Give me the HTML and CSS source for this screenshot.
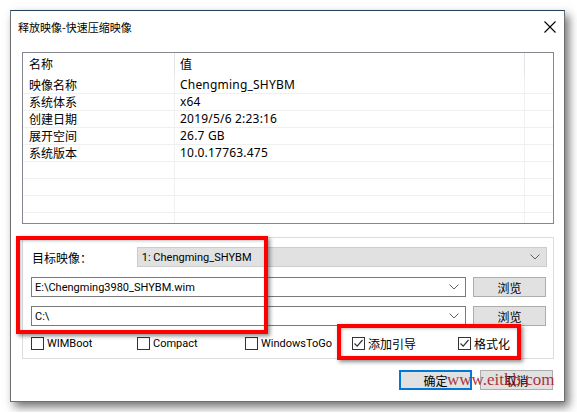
FILE: index.html
```html
<!DOCTYPE html>
<html lang="zh-CN">
<head>
  <meta charset="UTF-8">
  <title>释放映像-快速压缩映像</title>
  <link rel="stylesheet" href="styles.css">
</head>
<body>

  <div class="window">
    <div class="titlebar">
      <span class="title">释放映像-快速压缩映像</span>
      <svg class="close" width="12" height="12" viewBox="0 0 12 12">
        <path d="M0.5 0.5 L11.5 11.5 M11.5 0.5 L0.5 11.5" stroke="#000" stroke-width="1.1" fill="none"/>
      </svg>
    </div>

    <div class="content">
      <div class="listview">
        <div class="lv-head">
          <div class="c1">名称</div>
          <div class="c2">值</div>
          <div class="c3"></div>
        </div>
        <div class="lv-row"><div class="c1">映像名称</div><div class="c2">Chengming_SHYBM</div><div class="c3"></div></div>
        <div class="lv-row"><div class="c1">系统体系</div><div class="c2">x64</div><div class="c3"></div></div>
        <div class="lv-row"><div class="c1">创建日期</div><div class="c2">2019/5/6 2:23:16</div><div class="c3"></div></div>
        <div class="lv-row"><div class="c1">展开空间</div><div class="c2">26.7 GB</div><div class="c3"></div></div>
        <div class="lv-row"><div class="c1">系统版本</div><div class="c2">10.0.17763.475</div><div class="c3"></div></div>
        <div class="lv-row"><div class="c1"></div><div class="c2"></div><div class="c3"></div></div>
        <div class="lv-row"><div class="c1"></div><div class="c2"></div><div class="c3"></div></div>
        <div class="lv-row"><div class="c1"></div><div class="c2"></div><div class="c3"></div></div>
        <div class="lv-row"><div class="c1"></div><div class="c2"></div><div class="c3"></div></div>
      </div>

      <div class="group">
        <div class="g-row first">
          <span class="label">目标映像：</span>
          <div class="combo disabled">
            <span>1: Chengming_SHYBM</span>
            <svg class="chev" width="10" height="6" viewBox="0 0 10 6"><path d="M0.5 0.5 L5 5 L9.5 0.5" stroke="#606060" fill="none"/></svg>
          </div>
        </div>
        <div class="g-row second">
          <div class="combo path">
            <span>E:\Chengming3980_SHYBM.wim</span>
            <svg class="chev" width="10" height="6" viewBox="0 0 10 6"><path d="M0.5 0.5 L5 5 L9.5 0.5" stroke="#606060" fill="none"/></svg>
          </div>
          <button class="btn browse">浏览</button>
        </div>
        <div class="g-row third">
          <div class="combo path">
            <span>C:\</span>
            <svg class="chev" width="10" height="6" viewBox="0 0 10 6"><path d="M0.5 0.5 L5 5 L9.5 0.5" stroke="#606060" fill="none"/></svg>
          </div>
          <button class="btn browse">浏览</button>
        </div>
        <div class="checks">
          <label class="chk w106"><span class="box"></span>WIMBoot</label>
          <label class="chk w108"><span class="box"></span>Compact</label>
          <label class="chk w107"><span class="box"></span>WindowsToGo</label>
          <label class="chk cjk w106"><span class="box on"><svg width="11" height="11" viewBox="0 0 11 11"><path d="M1.5 5.5 L4.2 8.2 L9.5 2" stroke="#333" stroke-width="1.2" fill="none"/></svg></span>添加引导</label>
          <label class="chk cjk"><span class="box on"><svg width="11" height="11" viewBox="0 0 11 11"><path d="M1.5 5.5 L4.2 8.2 L9.5 2" stroke="#333" stroke-width="1.2" fill="none"/></svg></span>格式化</label>
        </div>
      </div>

      <div class="actions">
        <button class="btn default">确定</button>
        <button class="btn">取消</button>
      </div>
    </div>

    <!-- red markers drawn over the dialog -->
    <div class="mark mark-image"></div>
    <div class="mark mark-boot"></div>
    <div class="watermark">www.eitkb.com</div>
  </div>

</body>
</html>
```

FILE: styles.css
```css
body {
  margin: 0;
  padding: 10px;
  background: #fff;
  font-family: "Noto Sans", "Noto Sans CJK SC", sans-serif;
  font-size: 12px;
  color: #000;
}
.window {
  position: relative;
  width: 553px;
  height: 390px;
  background: #fff;
  border: 1px solid #6f6f6f;
  border-top-color: #23415e;
  box-shadow: 4px 5px 9px rgba(0,0,0,0.55);
}
.titlebar {
  height: 30px;
  display: flex;
  align-items: center;
  justify-content: space-between;
  padding: 0 8px 0 7px;
}
.title {
  font-family: "Noto Sans CJK SC", sans-serif;
  font-size: 11px;
  padding-top: 1px;
}
.close {
  margin-top: 1px;
}
.content {
  padding: 11px 10px 0 11px;
}

/* list of image properties */
.listview {
  height: 170px;
  border: 1px solid #828790;
  overflow: hidden;
}
.lv-head, .lv-row {
  display: flex;
}
.lv-head {
  height: 24px;
  align-items: center;
  font-family: "Noto Sans CJK SC", sans-serif;
  font-size: 12px;
}
.lv-head .c1, .lv-head .c2, .lv-head .c3 {
  height: 24px;
  line-height: 22px;
}
.lv-head .c2 {
  border-left: 1px solid #e5e5e5;
}
.lv-head .c3 {
  border-left: 1px solid #e5e5e5;
}
.lv-row {
  height: 17px;
  line-height: 16px;
  border-bottom: 1px solid #f0f0f0;
  box-sizing: border-box;
}
.lv-row .c2, .lv-row .c3 {
  border-left: 1px solid #f0f0f0;
}
.c1 {
  width: 151px;
  padding-left: 6px;
  box-sizing: border-box;
  font-family: "Noto Sans CJK SC", sans-serif;
}
.c2 {
  width: 350px;
  padding-left: 5px;
  box-sizing: border-box;
  letter-spacing: 0.2px;
}
.lv-head .c2 {
  letter-spacing: 0;
}
.c3 {
  flex: 1;
}

/* target / path options */
.group {
  margin-top: 13px;
  height: 122px;
  border: 1px solid #dcdcdc;
  padding: 9px 6px 0 8px;
  box-sizing: border-box;
  font-family: Roboto, "Noto Sans CJK SC", sans-serif;
  font-size: 11px;
}
.g-row {
  display: flex;
  align-items: center;
  height: 20px;
}
.g-row.second {
  margin-top: 10px;
}
.g-row.third {
  margin-top: 9px;
}
.label {
  width: 106px;
  padding-left: 1px;
  box-sizing: border-box;
  font-family: "Noto Sans CJK SC", sans-serif;
  font-size: 12px;
}
.combo {
  height: 20px;
  box-sizing: border-box;
  display: flex;
  align-items: center;
  justify-content: space-between;
  padding: 0 6px 0 4px;
}
.combo.disabled {
  width: 411px;
  background: #e1e1e1;
  border: 1px solid #cccccc;
}
.combo.path {
  width: 435px;
  background: #fff;
  border: 1px solid #7a7a7a;
  padding-left: 3px;
}
.btn {
  height: 20px;
  width: 73px;
  box-sizing: border-box;
  background: #e1e1e1;
  border: 1px solid #adadad;
  font-family: "Noto Sans CJK SC", sans-serif;
  font-size: 12px;
  color: #000;
  padding: 0;
}
.btn.browse {
  margin-left: 7px;
}
.btn.default {
  border: 2px solid #0078d7;
}
.checks {
  display: flex;
  align-items: center;
  margin-top: 10px;
  height: 14px;
}
.chk {
  display: flex;
  align-items: center;
}
.chk.cjk {
  font-family: "Noto Sans CJK SC", sans-serif;
  font-size: 12px;
}
.w106 { width: 106px; }
.w107 { width: 107px; }
.w108 { width: 108px; }
.box {
  width: 13px;
  height: 13px;
  box-sizing: border-box;
  border: 1px solid #333;
  background: #fff;
  margin-right: 3px;
  display: flex;
  align-items: center;
  justify-content: center;
}
.actions {
  display: flex;
  justify-content: flex-end;
  gap: 8px;
  margin-top: 11px;
  padding-right: 1px;
}

/* annotations */
.mark {
  position: absolute;
  border: 4px solid #ff0000;
  box-shadow: 2px 2px 4px rgba(0,0,0,0.45), inset 1px 1px 3px rgba(0,0,0,0.25);
}
.mark-image {
  left: 5px;
  top: 225px;
  width: 244px;
  height: 90px;
}
.mark-boot {
  left: 326px;
  top: 313px;
  width: 176px;
  height: 28px;
}
.watermark {
  position: absolute;
  left: 436px;
  top: 359px;
  font-family: "Liberation Serif", serif;
  font-size: 17px;
  color: #a8202e;
  opacity: 0.9;
}
```
